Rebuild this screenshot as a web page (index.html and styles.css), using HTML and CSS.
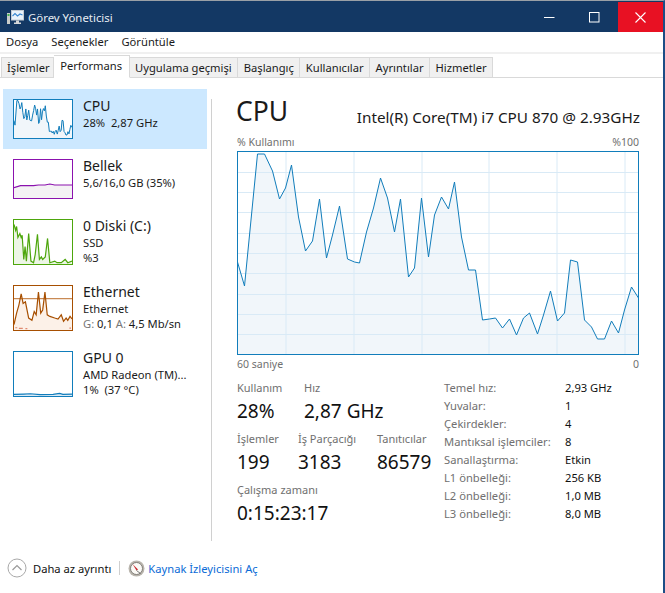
FILE: index.html
```html
<!DOCTYPE html>
<html lang="tr">
<head>
<meta charset="utf-8">
<title>Görev Yöneticisi</title>
<link rel="stylesheet" href="styles.css">
</head>
<body>
<div class="window">
  <header class="titlebar">
    <svg class="app-icon" width="17" height="15" viewBox="0 0 17 15">
      <rect x="0" y="3" width="3" height="11" fill="#c9ccc9"/>
      <rect x=".5" y="4" width="2" height="2" fill="#3fb24a"/>
      <rect x="4.500" y=".5" width="12" height="9.500" fill="#eaf3fb" stroke="#c6ccd2"/>
      <path d="M5.500 6l2.500-2.500 2.500 2.500 2.500-2 2.500 1" fill="none" stroke="#3a87d0" stroke-width="1.100"/>
      <path d="M9 10.500h3v2h-3zM7 12.500h7v1.500h-7z" fill="#d6d8da"/>
    </svg>
    <span class="app-title">Görev Yöneticisi</span>
    <div class="win-buttons">
      <span class="win-btn"><svg width="11" height="11" viewBox="0 0 11 11"><path d="M0 5.500h10.500" stroke="#fff" fill="none"/></svg></span>
      <span class="win-btn"><svg width="11" height="11" viewBox="0 0 11 11"><rect x=".5" y=".5" width="9.500" height="9.500" stroke="#fff" fill="none"/></svg></span>
      <span class="win-btn win-close"><svg width="11" height="11" viewBox="0 0 11 11"><path d="M.5.500l10 10M10.500.500l-10 10" stroke="#fff" stroke-width="1.100" fill="none"/></svg></span>
    </div>
  </header>

  <nav class="menubar">
    <span>Dosya</span><span>Seçenekler</span><span>Görüntüle</span>
  </nav>

  <div class="tabs">
    <span class="tab tab-first">İşlemler</span>
    <span class="tab tab-active">Performans</span>
    <span class="tab">Uygulama geçmişi</span>
    <span class="tab">Başlangıç</span>
    <span class="tab">Kullanıcılar</span>
    <span class="tab">Ayrıntılar</span>
    <span class="tab">Hizmetler</span>
  </div>

  <main class="main">
    <aside class="sidebar">
      <div class="item item-selected">
        <svg class="thumb thumb-cpu" viewBox="237 151 402 204" preserveAspectRatio="none">
          <polygon class="fill-cpu" points="237,355 237,262 244,286 257,154 264,154 272,171 279,199 285,188 291,165 298,217 305,251 312,241 319,199 326,258 332,235 339,206 347,259 354,262 359,263 366,232 373,208 380,178 387,198 394,232 400,199 408,277 414,268 421,198 428,257 434,215 441,197 448,209 454,182 461,237 468,270 475,270 482,320 489,319 495,318 502,328 509,319 516,335 523,318 529,313 537,334 543,315 550,291 557,321 564,313 570,260 577,262 584,320 591,327 597,339 604,339 611,321 618,333 624,310 631,287 638,298 638,355"/>
          <polyline class="line-cpu" points="237,262 244,286 257,154 264,154 272,171 279,199 285,188 291,165 298,217 305,251 312,241 319,199 326,258 332,235 339,206 347,259 354,262 359,263 366,232 373,208 380,178 387,198 394,232 400,199 408,277 414,268 421,198 428,257 434,215 441,197 448,209 454,182 461,237 468,270 475,270 482,320 489,319 495,318 502,328 509,319 516,335 523,318 529,313 537,334 543,315 550,291 557,321 564,313 570,260 577,262 584,320 591,327 597,339 604,339 611,321 618,333 624,310 631,287 638,298"/>
        </svg>
        <div class="item-text">
          <div class="item-name">CPU</div>
          <div class="item-sub">28%&nbsp; 2,87 GHz</div>
        </div>
      </div>
      <div class="item">
        <svg class="thumb thumb-mem" viewBox="40 28 178 117" preserveAspectRatio="none">
          <polygon fill="#f4f2f4" points="40,145 40,113 60,107 100,107 115,105 135,105 150,102 165,105 218,105 218,145"/>
          <polyline class="spark" stroke="#8b12ae" points="40,113 60,107 100,107 115,105 135,105 150,102 165,105 218,105"/>
        </svg>
        <div class="item-text">
          <div class="item-name">Bellek</div>
          <div class="item-sub">5,6/16,0 GB (35%)</div>
        </div>
      </div>
      <div class="item item-tall">
        <svg class="thumb thumb-disk" viewBox="40 208 178 136" preserveAspectRatio="none">
          <polygon fill="#edf6e6" points="40,344 40,222 45,240 48,228 52,262 58,250 62,262 65,255 70,330 74,290 78,335 85,250 92,335 100,340 105,315 112,252 118,330 124,322 128,330 136,322 143,265 150,340 165,335 172,340 185,340 197,330 205,340 218,335 218,344"/>
          <polyline class="spark" stroke="#4da60c" points="40,222 45,240 48,228 52,262 58,250 62,262 65,255 70,330 74,290 78,335 85,250 92,335 100,340 105,315 112,252 118,330 124,322 128,330 136,322 143,265 150,340 165,335 172,340 185,340 197,330 205,340 218,335"/>
        </svg>
        <div class="item-text">
          <div class="item-name">0 Diski (C:)</div>
          <div class="item-sub">SSD</div>
          <div class="item-sub">%3</div>
        </div>
      </div>
      <div class="item item-tall">
        <svg class="thumb thumb-eth" viewBox="40 16 178 136" preserveAspectRatio="none">
          <polygon fill="#fcf1e8" points="40,152 40,135 48,100 55,75 62,40 68,70 75,65 85,115 95,122 102,95 108,105 115,35 122,100 128,90 135,35 142,105 150,110 165,115 175,118 185,105 192,125 200,115 205,122 212,110 218,118 218,152"/>
          <path class="spark" d="M40 55h178" stroke="#c98a55"/>
          <polyline class="spark" stroke="#a74f01" points="40,135 48,100 55,75 62,40 68,70 75,65 85,115 95,122 102,95 108,105 115,35 122,100 128,90 135,35 142,105 150,110 165,115 175,118 185,105 192,125 200,115 205,122 212,110 218,118"/>
          <path class="spark" d="M44 145h6M55 147h12M75 148h6M210 146h5" stroke="#e08a70"/>
        </svg>
        <div class="item-text">
          <div class="item-name">Ethernet</div>
          <div class="item-sub">Ethernet</div>
          <div class="item-sub"><span class="muted">G:</span> 0,1 <span class="muted">A:</span> 4,5 Mb/sn</div>
        </div>
      </div>
      <div class="item item-tall">
        <svg class="thumb thumb-gpu" viewBox="40 214 178 136" preserveAspectRatio="none">
          <polygon fill="#dcebf6" points="40,350 40,345 70,344 90,343 120,346 160,345 180,342 190,345 218,344 218,350"/>
          <polyline class="spark" stroke="#117dbb" points="40,345 70,344 90,343 120,346 160,345 180,342 190,345 218,344"/>
        </svg>
        <div class="item-text">
          <div class="item-name">GPU 0</div>
          <div class="item-sub">AMD Radeon (TM)...</div>
          <div class="item-sub">1%&nbsp; (37 °C)</div>
        </div>
      </div>
    </aside>

    <section class="content">
      <div class="heading">
        <h1 class="heading-title">CPU</h1>
        <span class="heading-model">Intel(R) Core(TM) i7 CPU 870 @ 2.93GHz</span>
      </div>
      <div class="chart-labels"><span>% Kullanımı</span><span>%100</span></div>
      <svg class="chart" width="403" height="204" viewBox="236.500 151 403 204">
        <polygon class="fill-cpu" points="237,355 237,262 244,286 257,154 264,154 272,171 279,199 285,188 291,165 298,217 305,251 312,241 319,199 326,258 332,235 339,206 347,259 354,262 359,263 366,232 373,208 380,178 387,198 394,232 400,199 408,277 414,268 421,198 428,257 434,215 441,197 448,209 454,182 461,237 468,270 475,270 482,320 489,319 495,318 502,328 509,319 516,335 523,318 529,313 537,334 543,315 550,291 557,321 564,313 570,260 577,262 584,320 591,327 597,339 604,339 611,321 618,333 624,310 631,287 638,298 638,355"/>
        <path class="grid" d="M237 172.500h401M237 192.500h401M237 212.500h401M237 233.500h401M237 253.500h401M237 273.500h401M237 294.500h401M237 314.500h401M237 334.500h401M285.500 151v203M353.500 151v203M421.500 151v203M488.500 151v203M556.500 151v203M624.500 151v203"/>
        <polyline class="line-cpu" points="237,262 244,286 257,154 264,154 272,171 279,199 285,188 291,165 298,217 305,251 312,241 319,199 326,258 332,235 339,206 347,259 354,262 359,263 366,232 373,208 380,178 387,198 394,232 400,199 408,277 414,268 421,198 428,257 434,215 441,197 448,209 454,182 461,237 468,270 475,270 482,320 489,319 495,318 502,328 509,319 516,335 523,318 529,313 537,334 543,315 550,291 557,321 564,313 570,260 577,262 584,320 591,327 597,339 604,339 611,321 618,333 624,310 631,287 638,298"/>
        <rect class="chart-frame" x="237" y="151.500" width="401" height="203"/>
      </svg>
      <div class="chart-labels chart-labels-bottom"><span>60 saniye</span><span>0</span></div>

      <div class="stats">
        <div class="stats-left">
          <div class="stat-row">
            <div class="stat stat-use"><div class="stat-label">Kullanım</div><div class="stat-value">28%</div></div>
            <div class="stat"><div class="stat-label">Hız</div><div class="stat-value">2,87 GHz</div></div>
          </div>
          <div class="stat-row">
            <div class="stat stat-proc"><div class="stat-label">İşlemler</div><div class="stat-value">199</div></div>
            <div class="stat stat-thread"><div class="stat-label">İş Parçacığı</div><div class="stat-value">3183</div></div>
            <div class="stat"><div class="stat-label">Tanıtıcılar</div><div class="stat-value">86579</div></div>
          </div>
          <div class="stat-row">
            <div class="stat"><div class="stat-label">Çalışma zamanı</div><div class="stat-value">0:15:23:17</div></div>
          </div>
        </div>
        <dl class="specs">
          <dt>Temel hız:</dt><dd>2,93 GHz</dd>
          <dt>Yuvalar:</dt><dd>1</dd>
          <dt>Çekirdekler:</dt><dd>4</dd>
          <dt>Mantıksal işlemciler:</dt><dd>8</dd>
          <dt>Sanallaştırma:</dt><dd>Etkin</dd>
          <dt>L1 önbelleği:</dt><dd>256 KB</dd>
          <dt>L2 önbelleği:</dt><dd>1,0 MB</dd>
          <dt>L3 önbelleği:</dt><dd>8,0 MB</dd>
        </dl>
      </div>
    </section>
  </main>

  <footer class="footer">
    <svg class="less-icon" width="20" height="20" viewBox="0 0 20 20">
      <circle cx="10" cy="10" r="9" fill="#fff" stroke="#a9a9a9"/>
      <path d="M5.500 12l4.500-4.500 4.500 4.500" fill="none" stroke="#9a9a9a" stroke-width="1.200"/>
    </svg>
    <span class="less-text">Daha az ayrıntı</span>
    <span class="footer-sep"></span>
    <svg class="monitor-icon" width="17" height="17" viewBox="0 0 17 17">
      <circle cx="8.500" cy="8.500" r="8" fill="#b9b5ad"/>
      <circle cx="8.500" cy="8.500" r="6" fill="#fbfaf6" stroke="#6d6a64" stroke-width=".8"/>
      <path d="M4.500 4l5.500 5.500-1.500 1z" fill="#c9262c"/>
      <path d="M8.500 10.500l4 3" stroke="#555" stroke-width=".8"/>
    </svg>
    <a class="monitor-link">Kaynak İzleyicisini Aç</a>
  </footer>
</div>
</body>
</html>
```

FILE: styles.css
```css
* { box-sizing: border-box; }
html, body { margin: 0; padding: 0; background: #fff; }
body {
  width: 665px;
  height: 593px;
  overflow: hidden;
  font-family: "Noto Sans", "Open Sans", sans-serif;
  font-size: 11.2px;
  color: #1a1a1a;
}
.window {
  width: 665px;
  height: 593px;
  display: flex;
  flex-direction: column;
  border-top: 1px solid #9aa0a6;
  border-right: 2px solid #1c4d86;
}
.titlebar {
  height: 31px;
  flex: none;
  background: #133864;
  display: flex;
  align-items: center;
  color: #e8edf3;
  padding-left: 7px;
  border-top: 1px solid #133864;
}
.app-icon { flex: none; margin-right: 4px; }
.app-title { font-size: 11.4px; }
.win-buttons { margin-left: auto; display: flex; align-self: flex-start; height: 30px; }
.win-btn { width: 45px; height: 30px; padding-right: 2px; display: flex; align-items: center; justify-content: center; }
.win-close { background: #e81123; padding-right: 0; }

.menubar {
  height: 18px;
  flex: none;
  display: flex;
  align-items: center;
  gap: 13px;
  padding-left: 6px;
  color: #1a1a1a;
}
.tabs {
  flex: none;
  height: 26px;
  margin-top: 2px;
  border-top: 2px solid #f0f0f0;
  border-bottom: 1px solid #d9d9d9;
  display: flex;
  align-items: flex-end;
  padding-left: 1px;
}
.tab {
  height: 21px;
  margin-bottom: -1px;
  padding: 0 5.500px;
  display: flex;
  align-items: center;
  background: #f0f0f0;
  border: 1px solid #d9d9d9;
  border-left: 0;
}
.tab-first { border-left: 1px solid #d9d9d9; padding: 0 3px 0 5px; }
.tab-active {
  height: 23px;
  background: #fff;
  border-bottom-color: #fff;
  padding: 0 6.500px 2px;
}

.main { flex: none; height: 463px; display: flex; padding-left: 3px; }
.sidebar { width: 204px; flex: none; padding-top: 11px; }
.item { height: 60px; display: flex; padding: 10px 0 0 10px; }
.item-tall { height: 66px; }
.item-selected { background: #cce8ff; }
.thumb { flex: none; width: 60px; background: #fff; border: 1px solid; margin-right: 10px; }
.thumb-cpu { height: 40px; border-color: #117dbb; }
.thumb-mem { height: 40px; border-color: #8b12ae; }
.thumb-disk { height: 46px; border-color: #4da60c; }
.thumb-eth { height: 46px; border-color: #a74f01; }
.thumb-gpu { height: 46px; border-color: #117dbb; }
.item-text { margin-top: -3px; line-height: 15px; }
.item-name { font-size: 14px; line-height: 19px; }
.muted { color: #767676; }
.spark { fill: none; stroke-width: 1.2; vector-effect: non-scaling-stroke; }
.fill-cpu { fill: #f1f6fa; }
.line-cpu { fill: none; stroke: #117dbb; stroke-width: 1; vector-effect: non-scaling-stroke; }

.content {
  flex: none;
  width: 453px;
  height: 442px;
  margin-top: 21px;
  margin-left: 4px;
  padding-left: 25px;
  border-left: 1px solid #d0d0d0;
  display: flex;
  flex-direction: column;
}
.heading { display: flex; align-items: flex-end; justify-content: space-between; width: 404px; height: 30px; margin-top: -3px; margin-left: -1px; }
.heading-title { margin: 0; font-size: 26.500px; font-weight: 400; line-height: 30px; }
.heading-model { font-size: 15.300px; line-height: 20px; margin-bottom: -1px; }
.chart-labels {
  display: flex;
  justify-content: space-between;
  width: 402px;
  height: 14px;
  margin-top: 9px;
  font-size: 10.5px;
  line-height: 14px;
  color: #707070;
}
.chart-labels-bottom { margin-top: 2px; }
.chart { display: block; flex: none; margin-top: 2px; }
.grid { fill: none; stroke: #d9eaf6; stroke-width: 1; }
.chart-frame { fill: none; stroke: #117dbb; stroke-width: 1; }

.stats { display: flex; margin-top: 9px; }
.stats-left { width: 207px; flex: none; }
.stat-row { display: flex; height: 51px; }
.stat-use { width: 67px; }
.stat-proc { width: 61px; }
.stat-thread { width: 79px; }
.stat-label { font-size: 11px; line-height: 15px; color: #707070; }
.stat-value { font-size: 19px; line-height: 27px; margin-top: 3px; color: #111; }
.specs {
  margin: -1px 0 0;
  display: grid;
  grid-template-columns: 121px auto;
  grid-auto-rows: 18px;
  line-height: 18px;
  align-content: start;
}
.specs dt { color: #707070; }
.specs dd { margin: 0; color: #111; }

.footer {
  flex: 1;
  display: flex;
  align-items: center;
  padding: 2px 0 0 7px;
}
.less-icon { flex: none; margin-right: 6px; }
.less-text { color: #111; }
.footer-sep { width: 1px; height: 14px; background: #cfcfcf; margin: 0 8px; }
.monitor-icon { flex: none; margin-right: 3px; }
.monitor-link { color: #0b6bd6; }
```
